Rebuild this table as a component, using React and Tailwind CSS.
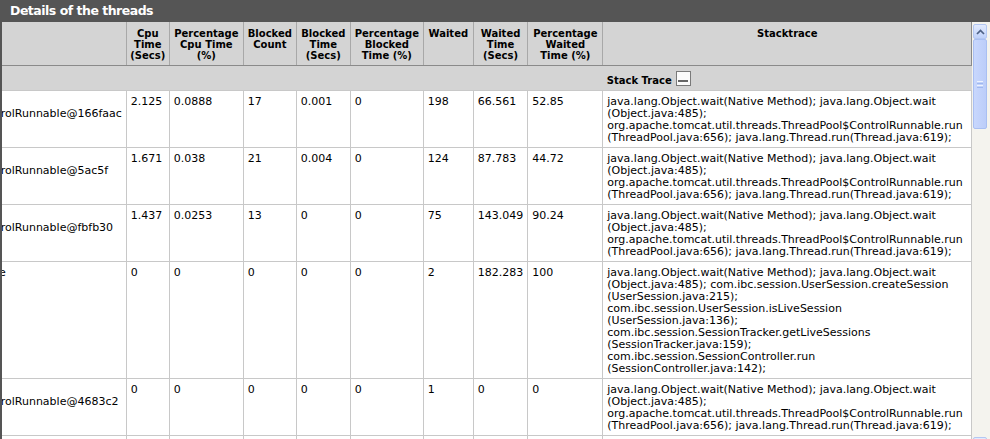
import React, { useLayoutEffect, useRef } from "react";

const STD = [
  "java.lang.Object.wait(Native Method); java.lang.Object.wait",
  "(Object.java:485);",
  "org.apache.tomcat.util.threads.ThreadPool$ControlRunnable.run",
  "(ThreadPool.java:656); java.lang.Thread.run(Thread.java:619);",
];

const SESSION = [
  "java.lang.Object.wait(Native Method); java.lang.Object.wait",
  "(Object.java:485); com.ibc.session.UserSession.createSession",
  "(UserSession.java:215);",
  "com.ibc.session.UserSession.isLiveSession",
  "(UserSession.java:136);",
  "com.ibc.session.SessionTracker.getLiveSessions",
  "(SessionTracker.java:159);",
  "com.ibc.session.SessionController.run",
  "(SessionController.java:142);",
];

const rows = [
  {
    name: ["http-8080-Processor25", "org.apache.tomcat.util.threads.ThreadPool$ControlRunnable@166faac"],
    vals: ["2.125", "0.0888", "17", "0.001", "0", "198", "66.561", "52.85"],
    stack: STD,
  },
  {
    name: ["http-8080-Processor24", "org.apache.tomcat.util.threads.ThreadPool$ControlRunnable@5ac5f"],
    vals: ["1.671", "0.038", "21", "0.004", "0", "124", "87.783", "44.72"],
    stack: STD,
  },
  {
    name: ["http-8080-Processor23", "org.apache.tomcat.util.threads.ThreadPool$ControlRunnable@fbfb30"],
    vals: ["1.437", "0.0253", "13", "0", "0", "75", "143.049", "90.24"],
    stack: STD,
  },
  {
    name: ["com.ibc.session.SessionsTracker$SessionsUpdate"],
    vals: ["0", "0", "0", "0", "0", "2", "182.283", "100"],
    stack: SESSION,
  },
  {
    name: ["http-8080-Processor22", "org.apache.tomcat.util.threads.ThreadPool$ControlRunnable@4683c2"],
    vals: ["0", "0", "0", "0", "0", "1", "0", "0"],
    stack: STD,
  },
  {
    name: ["http-8080-Processor21", "org.apache.tomcat.util.threads.ThreadPool$ControlRunnable@1a2b3c"],
    vals: ["0", "0", "0", "0", "0", "1", "0", "0"],
    stack: STD,
  },
];

const headers = [
  { lines: ["Cpu", "Time", "(Secs)"], w: "w-[43px]" },
  { lines: ["Percentage", "Cpu Time", "(%)"], w: "w-[74px]" },
  { lines: ["Blocked", "Count"], w: "w-[53px]" },
  { lines: ["Blocked", "Time", "(Secs)"], w: "w-[54px]" },
  { lines: ["Percentage", "Blocked", "Time (%)"], w: "w-[73px]" },
  { lines: ["Waited"], w: "w-[50px]" },
  { lines: ["Waited", "Time", "(Secs)"], w: "w-[54px]" },
  { lines: ["Percentage", "Waited", "Time (%)"], w: "w-[75px]" },
  { lines: ["Stacktrace"], w: "w-[369px]" },
];

function Lines({ lines }) {
  return lines.map((l, i) => (
    <React.Fragment key={i}>
      {i > 0 && <br />}
      {l}
    </React.Fragment>
  ));
}

function SbButton({ dir }) {
  return (
    <div className="h-[15px] shrink-0 rounded-[2px] border border-[#b3c7f3] bg-gradient-to-b from-[#e3ebfe] to-[#bfd1fa] flex items-center justify-center">
      <svg width="9" height="6" viewBox="0 0 9 6">
        <path
          d={dir === "up" ? "M1 5 L4.5 1.5 L8 5" : "M1 1 L4.5 4.5 L8 1"}
          stroke="#4d6185"
          strokeWidth="1.7"
          fill="none"
        />
      </svg>
    </div>
  );
}

function Scrollbar() {
  return (
    <div className="w-[18px] shrink-0 flex flex-col bg-[#f4f3ee] pl-[1px] pr-[3px] pt-[2px]">
      <SbButton dir="up" />
      <div className="h-[90px] shrink-0 rounded-[2px] border border-[#a9bff2] bg-gradient-to-r from-[#c8d7fd] to-[#bccdf9] flex flex-col items-center justify-center gap-[1px]">
        <div className="w-[6px] h-[1px] bg-[#eef3fe]" />
        <div className="w-[6px] h-[1px] bg-[#9fb8ef]" />
        <div className="w-[6px] h-[1px] bg-[#eef3fe]" />
        <div className="w-[6px] h-[1px] bg-[#9fb8ef]" />
      </div>
      <div className="flex-1" />
      <SbButton dir="down" />
    </div>
  );
}

export default function App() {
  const scRef = useRef(null);
  const thRef = useRef(null);

  useLayoutEffect(() => {
    const adjust = () => {
      const sc = scRef.current;
      const th = thRef.current;
      if (!sc || !th) return;
      const r = th.getBoundingClientRect();
      sc.scrollLeft += r.right - 126;
    };
    adjust();
    if (document.fonts && document.fonts.ready) document.fonts.ready.then(adjust);
  }, []);

  const cell = "align-top border border-[#c8c8c8] px-[4px] pt-[5px] pb-[3px] text-[11px] leading-[12px] whitespace-nowrap";

  return (
    <div className="h-[439px] overflow-hidden bg-white text-black font-['DejaVu_Sans',sans-serif]">
      <div className="h-[22px] bg-[#555555] pl-[10px] flex items-center text-white font-bold text-[12.5px] tracking-[-0.5px]">
        Details of the threads
      </div>
      <div className="flex h-[430px]">
        <div ref={scRef} className="flex-1 min-w-0 overflow-hidden border-l-2 border-[#555555] bg-white">
          <div className="w-max pr-[40px]">
            <table className="border-collapse">
              <thead>
                <tr className="bg-[#d4d4d4]">
                  <th
                    ref={thRef}
                    className="border-r border-b border-r-[#a8a8a8] border-b-[#8a8a8a] px-[4px]"
                  />
                  {headers.map((h, i) => (
                    <th
                      key={i}
                      className={`${h.w} align-top text-center font-bold text-[10px] leading-[11px] pt-[6px] pb-[4px] px-[2px] whitespace-nowrap border-b border-b-[#8a8a8a] border-r ${
                        i === headers.length - 1 ? "border-r-[#8a8a8a]" : "border-r-[#a8a8a8]"
                      }`}
                    >
                      <Lines lines={h.lines} />
                    </th>
                  ))}
                </tr>
              </thead>
              <tbody>
                <tr className="bg-[#d4d4d4]">
                  <td colSpan={9} className="h-[25px]" />
                  <td className="align-bottom pl-[4px] pb-[4px]">
                    <div className="flex items-end gap-[4px]">
                      <span className="font-bold text-[10px] leading-[10px]">Stack Trace</span>
                      <span className="w-[15px] h-[15px] border border-[#7a7a7a] bg-[#fbfbfb] flex items-end justify-center pb-[3px]">
                        <span className="w-[10px] h-[2px] bg-[#666666]" />
                      </span>
                    </div>
                  </td>
                </tr>
                {rows.map((r, ri) => (
                  <tr key={ri}>
                    <td className={cell}>
                      <Lines lines={r.name} />
                    </td>
                    {r.vals.map((v, vi) => (
                      <td key={vi} className={cell}>
                        {v}
                      </td>
                    ))}
                    <td className={cell}>
                      <Lines lines={r.stack} />
                    </td>
                  </tr>
                ))}
              </tbody>
            </table>
          </div>
        </div>
        <Scrollbar />
      </div>
    </div>
  );
}
